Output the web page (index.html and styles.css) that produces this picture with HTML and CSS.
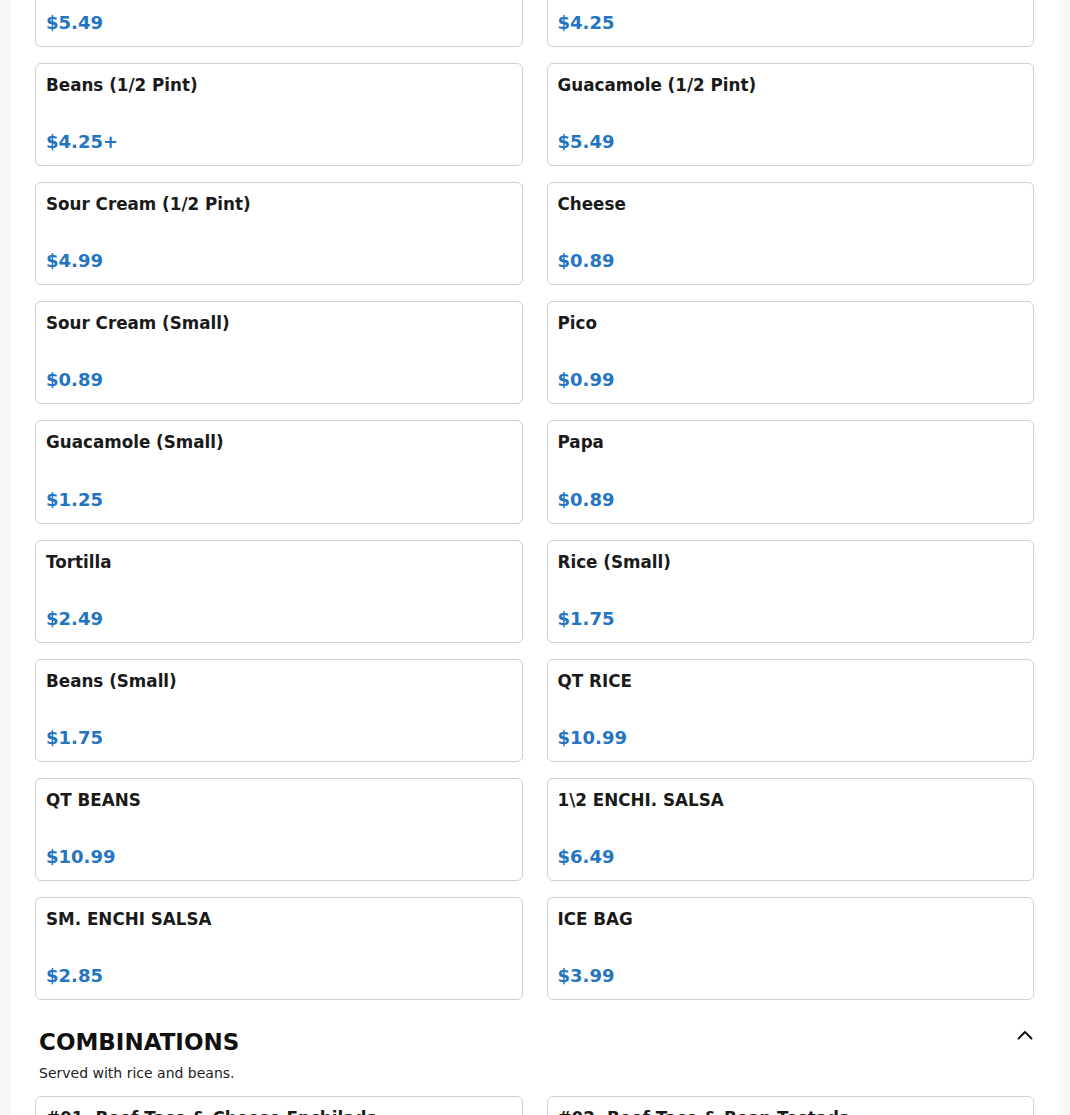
FILE: index.html
```html
<!DOCTYPE html>
<html lang="en">
<head>
<meta charset="utf-8">
<title>Menu</title>
<link rel="stylesheet" href="styles.css">
</head>
<body>
<main class="page">
  <section class="section section-first">
    <div class="grid">
      <div class="card"><div class="item-name">Rice (1/2 Pint)</div><div class="item-price">$5.49</div></div>
      <div class="card"><div class="item-name">Pico (1/2 Pint)</div><div class="item-price">$4.25</div></div>
      <div class="card"><div class="item-name">Beans (1/2 Pint)</div><div class="item-price">$4.25+</div></div>
      <div class="card"><div class="item-name">Guacamole (1/2 Pint)</div><div class="item-price">$5.49</div></div>
      <div class="card"><div class="item-name">Sour Cream (1/2 Pint)</div><div class="item-price">$4.99</div></div>
      <div class="card"><div class="item-name">Cheese</div><div class="item-price">$0.89</div></div>
      <div class="card"><div class="item-name">Sour Cream (Small)</div><div class="item-price">$0.89</div></div>
      <div class="card"><div class="item-name">Pico</div><div class="item-price">$0.99</div></div>
      <div class="card"><div class="item-name">Guacamole (Small)</div><div class="item-price">$1.25</div></div>
      <div class="card"><div class="item-name">Papa</div><div class="item-price">$0.89</div></div>
      <div class="card"><div class="item-name">Tortilla</div><div class="item-price">$2.49</div></div>
      <div class="card"><div class="item-name">Rice (Small)</div><div class="item-price">$1.75</div></div>
      <div class="card"><div class="item-name">Beans (Small)</div><div class="item-price">$1.75</div></div>
      <div class="card"><div class="item-name">QT RICE</div><div class="item-price">$10.99</div></div>
      <div class="card"><div class="item-name">QT BEANS</div><div class="item-price">$10.99</div></div>
      <div class="card"><div class="item-name">1\2 ENCHI. SALSA</div><div class="item-price">$6.49</div></div>
      <div class="card"><div class="item-name">SM. ENCHI SALSA</div><div class="item-price">$2.85</div></div>
      <div class="card"><div class="item-name">ICE BAG</div><div class="item-price">$3.99</div></div>
    </div>
  </section>

  <section class="section">
    <div class="section-header">
      <h2 class="section-title">COMBINATIONS</h2>
      <svg class="chevron" width="16" height="16" viewBox="0 0 16 16" aria-hidden="true">
        <path d="M1.5 10.5 L8 4 L14.5 10.5" fill="none" stroke="#111" stroke-width="1.9" stroke-linecap="round" stroke-linejoin="round"/>
      </svg>
    </div>
    <p class="section-desc">Served with rice and beans.</p>
    <div class="grid">
      <div class="card"><div class="item-name">#01. Beef Taco &amp; Cheese Enchilada</div><div class="item-price">$11.99</div></div>
      <div class="card"><div class="item-name">#02. Beef Taco &amp; Bean Tostada</div><div class="item-price">$11.99</div></div>
    </div>
  </section>
</main>
</body>
</html>
```

FILE: styles.css
```css
html, body {
  margin: 0;
  padding: 0;
  background: #f8f8f8;
  font-family: "DejaVu Sans", sans-serif;
  color: #1a1a1a;
}

.page {
  width: 1048px;
  margin: 0 auto;
  background: #ffffff;
  padding: 0 25px 0 24px;
  box-sizing: border-box;
  min-height: 1115px;
  overflow: hidden;
}

.section-first {
  margin-top: -56.15px;
}

.grid {
  display: grid;
  grid-template-columns: 1fr 1fr;
  column-gap: 24px;
  row-gap: 16px;
}

.card {
  border: 1px solid #d0d0d0;
  border-radius: 6px;
  height: 103.15px;
  box-sizing: border-box;
  padding: 10px 10px 12px;
  display: flex;
  flex-direction: column;
  justify-content: space-between;
  background: #fff;
}

.item-name {
  font-size: 16.75px;
  font-weight: bold;
  line-height: 22px;
  color: #1a1a1a;
}

.item-price {
  font-size: 18px;
  font-weight: bold;
  line-height: 22px;
  color: #2475c1;
}

.section-header {
  display: flex;
  align-items: flex-start;
  justify-content: space-between;
  padding: 0 1px 0 4px;
  margin-top: 28px;
}

.section-title {
  margin: 0;
  font-size: 23px;
  line-height: 29px;
  font-weight: bold;
  color: #111;
}

.chevron {
  display: block;
  margin-top: 0;
}

.section-desc {
  margin: 8px 0 14px;
  padding: 0 4px;
  font-size: 14px;
  line-height: 17px;
  color: #222;
}
```
